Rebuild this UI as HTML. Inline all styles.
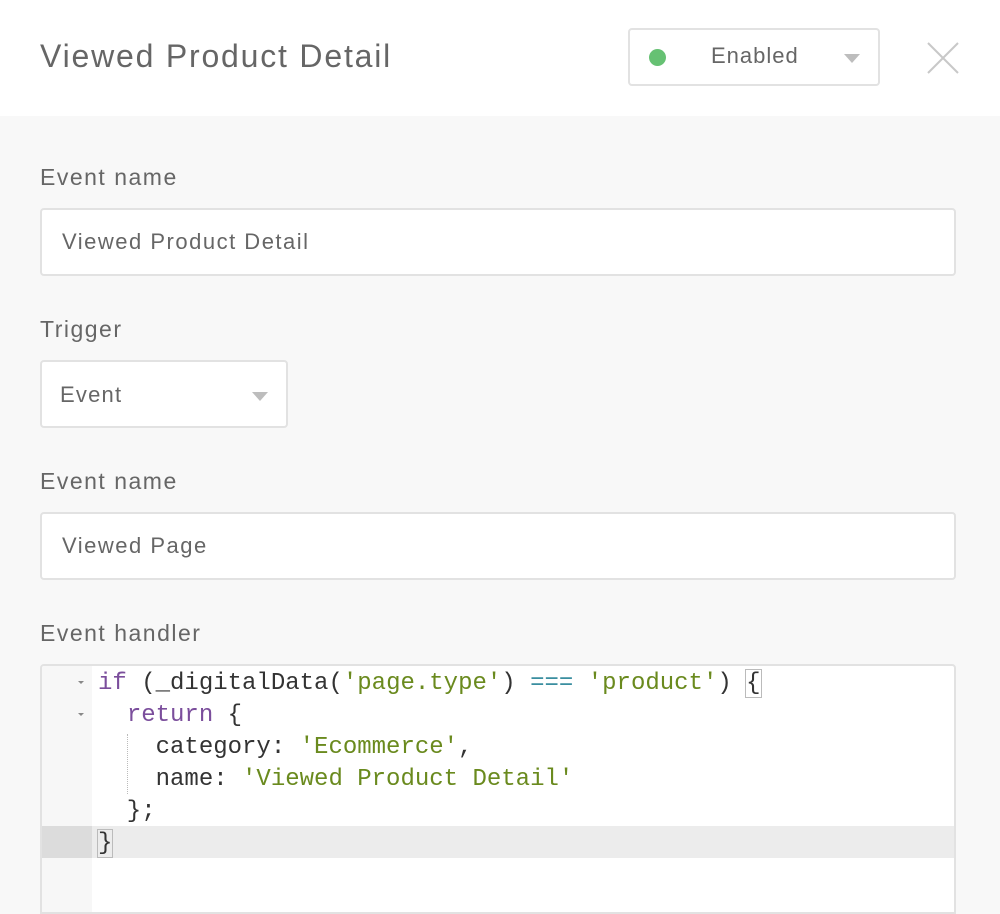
<!DOCTYPE html>
<html><head><meta charset="utf-8"><style>
*{margin:0;padding:0;box-sizing:border-box}
body{width:1000px;height:900px;overflow:hidden;background:#f8f8f8;font-family:"Liberation Sans",sans-serif;color:#666;position:relative}
.hdr{position:absolute;left:0;top:0;width:1000px;height:116px;background:#fff}
.title{position:absolute;left:40px;top:38px;font-size:32px;color:#666;letter-spacing:1.8px}
.sel{position:absolute;background:#fff;border:2px solid #e2e2e2;border-radius:4px}
.tri{position:absolute;width:0;height:0;border-left:8px solid transparent;border-right:8px solid transparent;border-top:9px solid #bdbdbd}
.lbl{position:absolute;left:40px;font-size:23px;color:#666;letter-spacing:1.5px}
.inp{position:absolute;left:40px;width:916px;height:68px;background:#fff;border:2px solid #e2e2e2;border-radius:4px;font-size:22px;color:#666;padding:19px 0 0 20px;letter-spacing:1.5px}
.code{position:absolute;left:40px;top:664px;width:916px;height:250px;background:#fff;border:2px solid #e2e2e2;border-radius:4px 4px 0 0;overflow:hidden}
.gut{position:absolute;left:0;top:0;width:50px;height:100%;background:#f7f7f7}
.ln{position:absolute;left:56px;font-family:"Liberation Mono",monospace;font-size:24px;color:#333;white-space:pre;line-height:32px;letter-spacing:0;margin-top:2px}
.k{color:#7b4e9c}.s{color:#6a8a1e}.o{color:#3a8ea0}
.fold{position:absolute;left:36px;width:0;height:0;border-left:3px solid transparent;border-right:3px solid transparent;border-top:3px solid #888}
</style></head><body>
<div class="hdr">
<div class="title">Viewed Product Detail</div>
<div class="sel" style="left:628px;top:28px;width:252px;height:58px">
<div style="position:absolute;left:19px;top:19px;width:17px;height:17px;border-radius:50%;background:#66c173"></div>
<div style="position:absolute;left:81px;top:13px;font-size:22px;color:#666;letter-spacing:1px">Enabled</div>
<div class="tri" style="left:214px;top:24px"></div>
</div>
<svg style="position:absolute;left:926px;top:41px" width="34" height="34"><path d="M2 2L32 32M32 2L2 32" stroke="#c8c8c8" stroke-width="2"/></svg>
</div>
<div class="lbl" style="top:164px">Event name</div>
<div class="inp" style="top:208px">Viewed Product Detail</div>
<div class="lbl" style="top:316px">Trigger</div>
<div class="sel" style="left:40px;top:360px;width:248px;height:68px">
<div style="position:absolute;left:18px;top:20px;font-size:22px;color:#666;letter-spacing:1.2px">Event</div>
<div class="tri" style="left:210px;top:30px"></div>
</div>
<div class="lbl" style="top:468px">Event name</div>
<div class="inp" style="top:512px">Viewed Page</div>
<div class="lbl" style="top:620px">Event handler</div>
<div class="code">
<div class="gut"></div>
<div style="position:absolute;left:0;top:160px;width:916px;height:32px;background:#ececec"></div>
<div style="position:absolute;left:0;top:160px;width:50px;height:32px;background:#dcdcdc"></div>
<div class="fold" style="top:15px"></div>
<div class="fold" style="top:47px"></div>
<div style="position:absolute;left:85px;top:68px;height:60px;border-left:1px dotted #bbb"></div>
<div class="ln" style="top:0"><span class="k">if</span> (_digitalData(<span class="s">'page.type'</span>) <span class="o">===</span> <span class="s">'product'</span>) <span style="outline:1px solid #bbb">{</span></div>
<div class="ln" style="top:32px">  <span class="k">return</span> {</div>
<div class="ln" style="top:64px">    category: <span class="s">'Ecommerce'</span>,</div>
<div class="ln" style="top:96px">    name: <span class="s">'Viewed Product Detail'</span></div>
<div class="ln" style="top:128px">  };</div>
<div class="ln" style="top:160px"><span style="outline:1px solid #bbb">}</span></div>
</div>
</body></html>
